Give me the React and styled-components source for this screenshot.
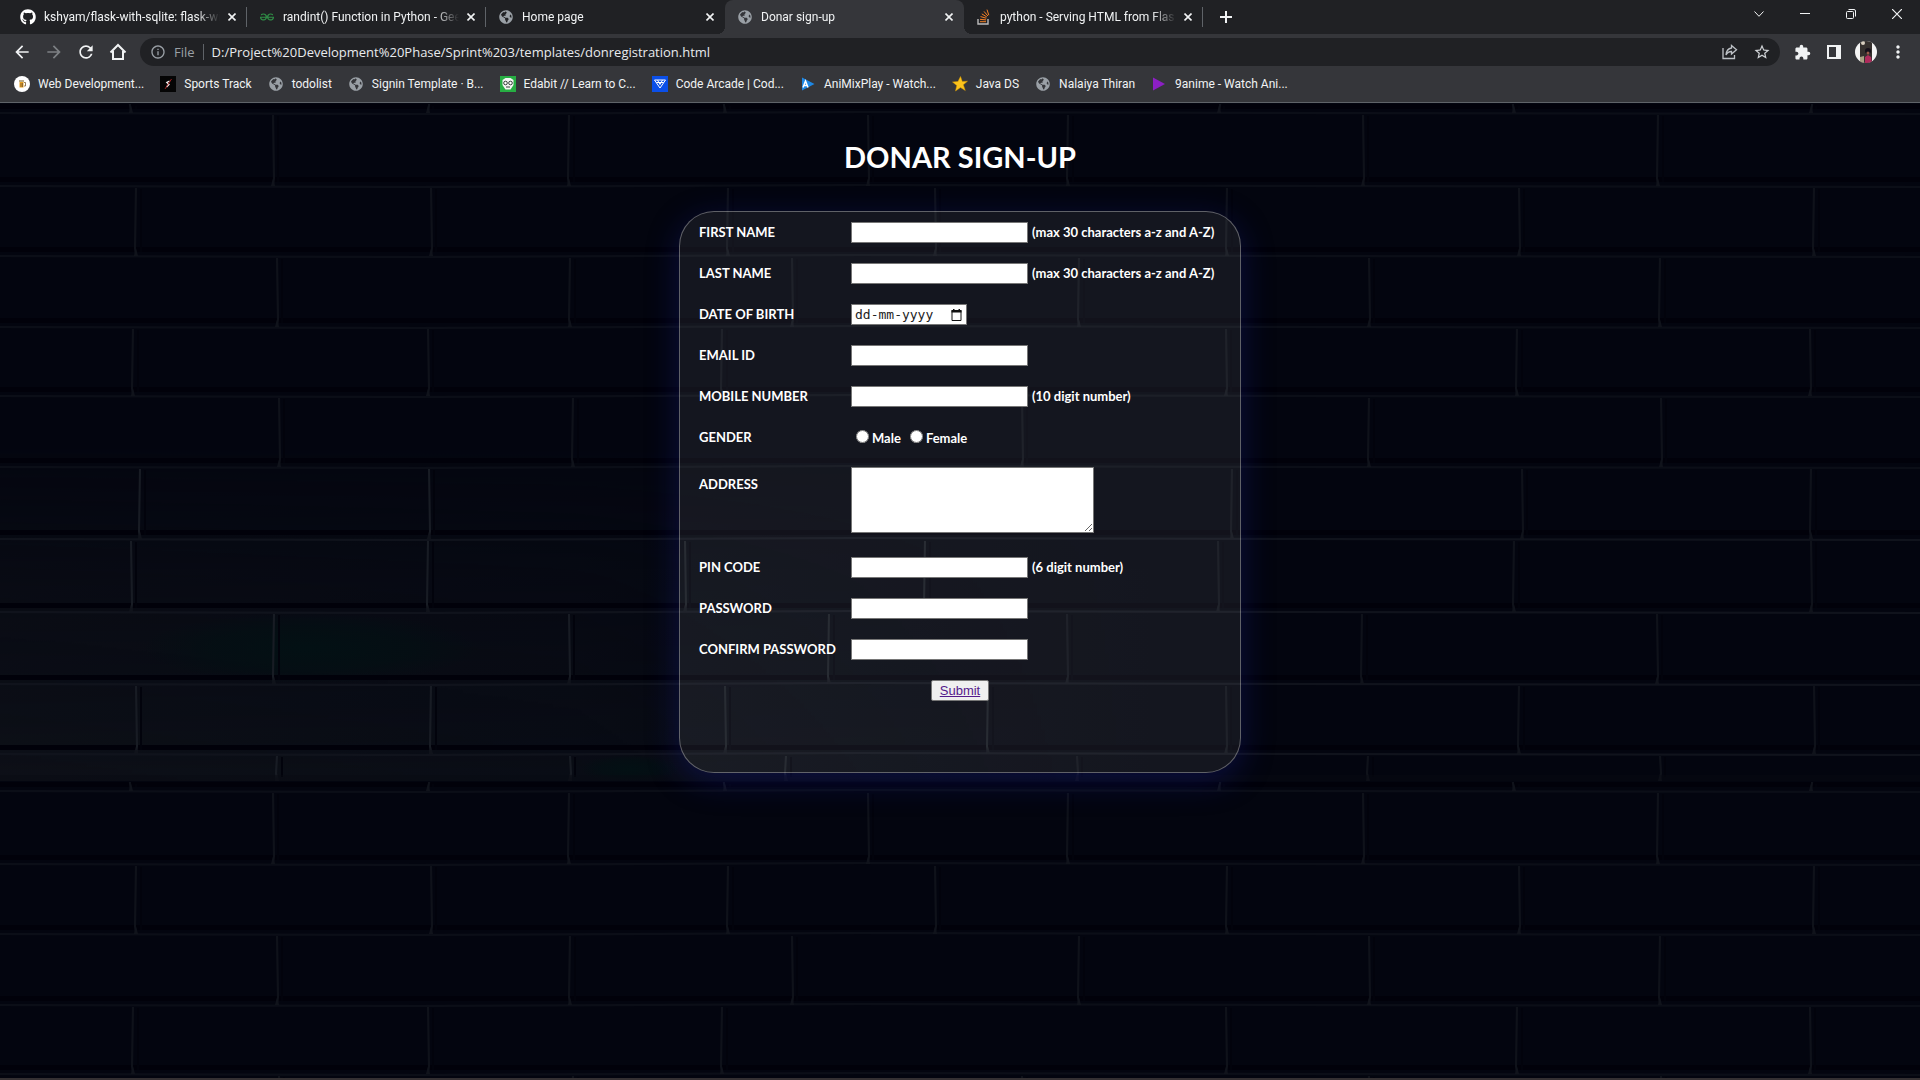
import React from "react";
import styled, { createGlobalStyle, css } from "styled-components";
import { FaGithub, FaGlobeAmericas } from "react-icons/fa";
import { SiGeeksforgeeks } from "react-icons/si";
import {
  MdArrowBack,
  MdArrowForward,
  MdRefresh,
  MdInfoOutline,
  MdStarBorder,
  MdExtension,
  MdMoreVert,
} from "react-icons/md";

const GlobalStyle = createGlobalStyle`
  *, *::before, *::after { box-sizing: border-box; }
  body { margin: 0; background: #03050f; }
`;

const uiFont = 'Roboto, "Open Sans", sans-serif';
const formFont = 'Lato, "Open Sans", sans-serif';

const Window = styled.div`
  display: flex;
  flex-direction: column;
  min-height: 100vh;
  font-family: ${uiFont};
`;

/* ---------- browser frame ---------- */

const TabStrip = styled.header`
  display: flex;
  align-items: stretch;
  height: 34px;
  padding-left: 8px;
  background: #202124;
`;

const Tab = styled.div`
  position: relative;
  display: flex;
  align-items: center;
  flex: 0 1 239px;
  min-width: 0;
  padding: 0 7px 0 12px;
  color: #f1f3f4;
  font-size: 12px;
  ${(p) =>
    p.$active &&
    css`
      background: #35363a;
      border-radius: 8px 8px 0 0;
      &::before,
      &::after {
        content: "";
        position: absolute;
        bottom: 0;
        width: 8px;
        height: 8px;
      }
      &::before {
        left: -8px;
        background: radial-gradient(circle at 0 0, transparent 8px, #35363a 8px);
      }
      &::after {
        right: -8px;
        background: radial-gradient(circle at 100% 0, transparent 8px, #35363a 8px);
      }
    `}
`;

const TabDivider = styled.span`
  position: absolute;
  top: 7px;
  right: 0;
  width: 1px;
  height: 20px;
  background: #5f6368;
`;

const TabTitle = styled.span`
  flex: 1;
  min-width: 0;
  margin: 0 4px 0 8px;
  overflow: hidden;
  white-space: nowrap;
  line-height: 18px;
  mask-image: linear-gradient(to right, #000 calc(100% - 24px), transparent);
`;

const Favicon = styled.span`
  display: flex;
  flex: none;
  align-items: center;
  justify-content: center;
  width: 16px;
  height: 16px;
  color: ${(p) => p.$color || "#9aa0a6"};
`;

const BareButton = styled.button`
  display: flex;
  flex: none;
  align-items: center;
  justify-content: center;
  width: ${(p) => p.$w || 16}px;
  height: ${(p) => p.$h || 16}px;
  padding: 0;
  border: 0;
  background: none;
  color: ${(p) => p.$color || "#f1f3f4"};
`;

const NewTab = styled(BareButton)`
  align-self: center;
  margin-left: 9px;
`;

const WindowControls = styled.div`
  display: flex;
  margin-left: auto;
`;

const Toolbar = styled.nav`
  display: flex;
  align-items: center;
  height: 36px;
  padding: 0 6px;
  background: #35363a;
`;

const Omnibox = styled.div`
  display: flex;
  align-items: center;
  flex: 1;
  height: 28px;
  margin: 0 6px;
  padding: 0 2px 0 10px;
  border-radius: 14px;
  background: #202124;
  color: #9aa0a6;
  font-size: 14px;
`;

const Scheme = styled.span`
  margin-left: 8px;
  padding-right: 8px;
  border-right: 1px solid #5f6368;
  font-family: "Open Sans", sans-serif;
  font-size: 13px;
  line-height: 16px;
`;

const Address = styled.input`
  flex: 1;
  min-width: 0;
  padding: 0 0 0 8px;
  border: 0;
  outline: 0;
  background: none;
  color: #e8eaed;
  font-family: "Open Sans", sans-serif;
  font-size: 13px;
`;

const Bookmarks = styled.nav`
  display: flex;
  align-items: center;
  gap: 16px;
  height: 33px;
  padding: 0 14px 5px;
  border-bottom: 1px solid #5f6368;
  background: #35363a;
`;

const Bookmark = styled.a`
  display: flex;
  align-items: center;
  gap: 8px;
  color: #f1f3f4;
  font-size: 12px;
  line-height: 18px;
  white-space: nowrap;
  text-decoration: none;
`;

/* ---------- page ---------- */

const Page = styled.main`
  position: relative;
  flex: 1;
  display: flex;
  flex-direction: column;
  align-items: center;
  overflow: hidden;
  border-bottom: 2px solid #343032;
  background: #03050f;
  color: #fff;
  font-family: ${formFont};
`;

const Wall = styled.svg`
  position: absolute;
  inset: 0;
  width: 100%;
  height: 100%;
`;

const Title = styled.h1`
  position: relative;
  margin: 34px 0;
  font-size: 29px;
  line-height: 40px;
  font-weight: 700;
`;

const Panel = styled.form`
  position: relative;
  width: 562px;
  max-width: 100%;
  padding: 0 9px 61px 19px;
  border: 1px solid rgba(255, 255, 255, 0.32);
  border-radius: 35px;
  background: rgba(255, 255, 255, 0.07);
  box-shadow: 0 8px 32px 0 rgba(24, 28, 145, 0.38);
  font-size: 13px;
  font-weight: 700;
`;

const Row = styled.div`
  display: grid;
  grid-template-columns: 132px 1fr;
  column-gap: 20px;
  align-items: ${(p) => (p.$tall ? "start" : "center")};
  min-height: ${(p) => (p.$tall ? 89 : 41)}px;
  padding: ${(p) => (p.$tall ? 9 : 10)}px 0;
`;

const Caption = styled.label`
  padding-top: ${(p) => (p.$tall ? 9 : 0)}px;
  padding-bottom: 2px;
  line-height: 16px;
  white-space: nowrap;
`;

const Hint = styled.span`
  padding-bottom: 2px;
  line-height: 16px;
`;

const Field = styled.div`
  display: flex;
  align-items: center;
  gap: 4px;
  white-space: nowrap;
`;

const boxStyle = css`
  border: 1px solid #767676;
  border-radius: 0;
  background: #fff;
  color: #000;
`;

const TextBox = styled.input`
  ${boxStyle}
  width: 177px;
  height: 21px;
  padding: 1px 2px;
`;

const AddressBox = styled.textarea`
  ${boxStyle}
  width: 243px;
  height: 66px;
  padding: 2px;
`;

const DateBox = styled.div`
  ${boxStyle}
  display: flex;
  align-items: center;
  width: 116px;
  height: 21px;
  padding: 0 4px 0 3px;
`;

const DateInput = styled.input`
  flex: 1;
  min-width: 0;
  padding: 0;
  border: 0;
  outline: 0;
  background: none;
  font-family: "DejaVu Sans Mono", monospace;
  font-size: 13px;
  &::placeholder {
    color: #222;
    opacity: 1;
  }
`;

const Choice = styled.label`
  display: flex;
  align-items: center;
  line-height: 16px;
  input {
    width: 13px;
    height: 13px;
    margin: 0 3px 2px 5px;
  }
`;

const Actions = styled.div`
  display: flex;
  justify-content: center;
  padding: 10px 10px 10px 0;
`;

const Submit = styled.button`
  height: 21px;
  padding: 0 8px;
  border: 1px solid #767676;
  border-radius: 2px;
  background: #efefef;
  color: #551a8b;
  font-family: "Liberation Sans", Arial, sans-serif;
  font-size: 13px;
  line-height: 16px;
  text-decoration: underline;
`;

/* ---------- drawings ---------- */

const courses = [
  [0, 10, [131, 428, 725, 1219, 1514, 1811]],
  [10, 83, [273, 569, 868, 1068, 1363, 1658]],
  [83, 153, [136, 431, 728, 935, 1227, 1519, 1814]],
  [153, 224, [277, 570, 792, 1079, 1369, 1660]],
  [224, 293, [133, 428, 722, 1226, 1517, 1810]],
  [293, 364, [279, 573, 1022, 1369, 1661]],
  [364, 436, [140, 429, 1232, 1522, 1811]],
  [436, 509, [131, 428, 685, 925, 1218, 1514, 1811]],
  [509, 581, [274, 569, 829, 1067, 1362, 1657]],
  [581, 651, [136, 431, 725, 988, 1226, 1519, 1814]],
  [651, 678, [277, 570, 786, 1077, 1368, 1660]],
];

function BrickWall() {
  return (
    <Wall aria-hidden="true">
      <defs>
        <linearGradient id="worn" x1="0" x2="1" y1="0" y2="0">
          <stop offset="0" stopColor="#10131a" stopOpacity=".75" />
          <stop offset=".3" stopColor="#0d1119" stopOpacity=".6" />
          <stop offset=".6" stopColor="#0a0e17" stopOpacity="0" />
        </linearGradient>
        <linearGradient id="fadeIn" x1="0" x2="0" y1="0" y2="1">
          <stop offset="0" stopColor="#000" />
          <stop offset=".4" stopColor="#888" />
          <stop offset="1" stopColor="#fff" />
        </linearGradient>
        <mask id="lower">
          <rect y="340" width="1920" height="338" fill="url(#fadeIn)" />
        </mask>
        <radialGradient id="moss">
          <stop offset="0" stopColor="#021114" stopOpacity=".9" />
          <stop offset=".6" stopColor="#021013" stopOpacity=".6" />
          <stop offset="1" stopColor="#021013" stopOpacity="0" />
        </radialGradient>
        <pattern id="bricks" width="1920" height="678" patternUnits="userSpaceOnUse">
          <rect width="1920" height="678" fill="#03050f" />
          <rect y="340" width="1920" height="338" fill="url(#worn)" mask="url(#lower)" />
          <ellipse cx="310" cy="545" rx="170" ry="36" fill="url(#moss)" />
          <ellipse cx="630" cy="666" rx="50" ry="14" fill="url(#moss)" />
          {courses.map(([top, bottom, joints], i) => (
            <g key={top}>
              {bottom < 678 && (
                <>
                  <rect y={bottom - 9} width="1920" height="5" fill="#01010a" />
                  <path
                    d={`M0 ${bottom}L420 ${bottom + 1}L860 ${bottom - 1}L1300 ${bottom}L1920 ${bottom + 1}`}
                    fill="none"
                    stroke={i > 5 ? "#10131c" : "#0b0e17"}
                    strokeWidth="2"
                  />
                </>
              )}
              {joints.map((x, n) => {
                const left = x < 1000;
                const lean = (i + n) % 2 ? 1 : -1;
                return (
                  <g key={x}>
                    <path d={`M${x + 5} ${top + 3}V${bottom - 4}`} stroke="#02030c" strokeWidth="2" />
                    <path
                      d={`M${x} ${top + 2}L${x + lean} ${bottom - 8}L${x} ${bottom}`}
                      fill="none"
                      stroke={i > 5 && left ? "#181c24" : "#0f121a"}
                      strokeWidth="2"
                    />
                    <path d={`M${x - 2} ${bottom}l2-7 2 7z`} fill="#10131b" />
                  </g>
                );
              })}
            </g>
          ))}
          <rect y="672" width="1920" height="6" fill="#070911" opacity=".4" />
        </pattern>
      </defs>
      <rect width="100%" height="100%" fill="url(#bricks)" />
    </Wall>
  );
}

const Cross = () => (
  <svg width="8" height="8" viewBox="0 0 8 8" stroke="currentColor" strokeWidth="1.6">
    <path d="M.5 .5l7 7M7.5 .5l-7 7" />
  </svg>
);

const StackIcon = () => (
  <svg width="14" height="16" viewBox="0 0 14 16" fill="none">
    <path d="M1 10v5h10v-5" stroke="#bcbbbb" strokeWidth="1.4" />
    <path
      d="M3 12.7h6M3 10.3l6 .6M3.5 7.6l5.8 1.6M4.8 4.9l5.1 3.1M7 2.4l3.9 4.6M10 .6l1.8 5.6"
      stroke="#f48024"
      strokeWidth="1"
    />
  </svg>
);

const HomeIcon = () => (
  <svg width="18" height="18" viewBox="0 0 18 18" fill="none" stroke="currentColor" strokeWidth="2">
    <path d="M1.5 9.500L9 2l7.500 7.500M4 8v8h10V8" />
  </svg>
);

const ShareIcon = () => (
  <svg width="16" height="16" viewBox="0 0 16 16" fill="none" stroke="currentColor" strokeWidth="1.3">
    <path d="M1 4v10.500h11.500V11" />
    <path d="M9.500 1.500l5 4.300-5 4.300V7.500C7 7.500 5.200 8.600 4 11c.3-4 2.300-6.500 5.500-7z" />
  </svg>
);

const PanelIcon = () => (
  <svg width="14" height="14" viewBox="0 0 14 14">
    <path fillRule="evenodd" fill="currentColor" d="M0 0h14v14H0zM2 2v10h7V2z" />
  </svg>
);

const Avatar = () => (
  <svg width="22" height="22" viewBox="0 0 22 22">
    <defs>
      <clipPath id="face">
        <circle cx="11" cy="11" r="11" />
      </clipPath>
    </defs>
    <g clipPath="url(#face)">
      <rect width="22" height="22" fill="#f4f4f4" />
      <rect x="5" width="12" height="22" fill="#35302e" />
      <circle cx="8" cy="2" r="2" fill="#d8cfc0" />
      <path d="M5 16l4-1v7H5z" fill="#a9a184" />
      <circle cx="13" cy="10" r="3" fill="#15101a" />
      <circle cx="13" cy="12" r="1.500" fill="#9a5a4a" />
      <path d="M10 16l3-2 3 2 1 6h-7z" fill="#b02a5c" />
    </g>
  </svg>
);

const BeerIcon = () => (
  <svg width="16" height="16" viewBox="0 0 16 16">
    <circle cx="8" cy="8" r="8" fill="#fff" />
    <path d="M5.500 5.500h4v6h-4z" fill="#e8a020" />
    <path d="M5 4h5v2H5z" fill="#b9a988" />
    <path d="M10 6.500h1.500v3.500H10M7 7v4M8.500 7v4" fill="none" stroke="#7a5a30" strokeWidth=".8" />
  </svg>
);

const SportsIcon = () => (
  <svg width="16" height="16" viewBox="0 0 16 16">
    <path fill="#050505" d="M0 0h16v16H0z" />
    <path d="M9.500 5L6.800 6.500l2.200 2L6.500 11" fill="none" stroke="#f2f2f2" strokeWidth="1.300" />
    <path d="M11.500 3L5 13" stroke="#c62828" strokeWidth=".8" />
  </svg>
);

const EdabitIcon = () => (
  <svg width="16" height="16" viewBox="0 0 16 16">
    <path fill="#27ae43" d="M0 0h16v16H0z" />
    <path d="M2.500 4l3-2h5l3 2v5l-3 4.500h-5L2.500 9z" fill="#f4f4f4" />
    <g fill="#fff" stroke="#1d2b22" strokeWidth=".9">
      <circle cx="5.500" cy="7" r="1.800" />
      <circle cx="10.500" cy="7" r="1.800" />
      <path d="M6 11h4" />
    </g>
  </svg>
);

const ArcadeIcon = () => (
  <svg width="16" height="16" viewBox="0 0 16 16">
    <path fill="#0b4fe8" d="M0 0h16v16H0z" />
    <path d="M2.500 4h11L8 12zM5.500 4L8 8.500 10.500 4M4.300 6.500h7.400" fill="none" stroke="#fff" />
  </svg>
);

const AniMixIcon = () => (
  <svg width="14" height="16" viewBox="0 0 14 16">
    <path d="M1 1.500L13.500 8 1 14.500z" fill="#1e88e5" />
    <path d="M2 11.500L4.500 5 7 11.500M3 9.500h3" fill="none" stroke="#fff" strokeWidth="1.500" />
  </svg>
);

const StarIcon = () => (
  <svg width="16" height="16" viewBox="0 0 16 16">
    <path
      d="M8.500 .5l1.800 5 5.200-.3-4.200 3.600 2 5.700-4.800-3L3.500 15l1.300-5.500L.5 6l5.500-.5z"
      fill="#fbc31c"
      stroke="#d99a00"
      strokeWidth=".5"
    />
  </svg>
);

const PlayIcon = () => (
  <svg width="14" height="16" viewBox="0 0 14 16">
    <path d="M1 1.500L13 8 1 14.500z" fill="#8c1fc4" />
  </svg>
);

const Globe = () => <FaGlobeAmericas size={14} />;

const tabs = [
  { title: "kshyam/flask-with-sqlite: flask-wi", icon: <FaGithub size={16} />, color: "#fff", divider: true },
  { title: "randint() Function in Python - Gee", icon: <SiGeeksforgeeks size={14} />, color: "#2f8d46", divider: true },
  { title: "Home page", icon: <Globe /> },
  { title: "Donar sign-up", icon: <Globe />, active: true },
  { title: "python - Serving HTML from Flas", icon: <StackIcon />, divider: true },
];

const bookmarks = [
  ["Web Development...", <BeerIcon />],
  ["Sports Track", <SportsIcon />],
  ["todolist", <Globe />],
  ["Signin Template · B...", <Globe />],
  ["Edabit // Learn to C...", <EdabitIcon />],
  ["Code Arcade | Cod...", <ArcadeIcon />],
  ["AniMixPlay - Watch...", <AniMixIcon />],
  ["Java DS", <StarIcon />],
  ["Nalaiya Thiran", <Globe />],
  ["9anime - Watch Ani...", <PlayIcon />],
];

function TextRow({ id, label, type = "text", hint }) {
  return (
    <Row>
      <Caption htmlFor={id}>{label}</Caption>
      <Field>
        <TextBox id={id} name={id} type={type} />
        {hint && <Hint>{hint}</Hint>}
      </Field>
    </Row>
  );
}

export default function App() {
  return (
    <Window>
      <GlobalStyle />
      <TabStrip>
        {tabs.map((t) => (
          <Tab key={t.title} $active={t.active}>
            <Favicon $color={t.color}>{t.icon}</Favicon>
            <TabTitle>{t.title}</TabTitle>
            <BareButton aria-label="Close tab">
              <Cross />
            </BareButton>
            {t.divider && <TabDivider />}
          </Tab>
        ))}
        <NewTab $w={28} $h={28} aria-label="New tab">
          <svg width="12" height="12" viewBox="0 0 12 12" stroke="currentColor" strokeWidth="2">
            <path d="M6 0v12M0 6h12" />
          </svg>
        </NewTab>
        <WindowControls>
          <BareButton $w={46} $h={28} aria-label="Search tabs">
            <svg width="10" height="6" viewBox="0 0 10 6" fill="none" stroke="currentColor">
              <path d="M.5 .5L5 5.300 9.500 .5" />
            </svg>
          </BareButton>
          <BareButton $w={46} $h={28} aria-label="Minimize">
            <svg width="10" height="2" viewBox="0 0 10 2">
              <path d="M0 0h10v1H0z" fill="currentColor" />
            </svg>
          </BareButton>
          <BareButton $w={46} $h={28} aria-label="Restore">
            <svg width="10" height="10" viewBox="0 0 10 10" fill="none" stroke="currentColor">
              <rect x=".5" y="2.500" width="7" height="7" rx="1" />
              <path d="M2.500 .5H8A1.500 1.500 0 0 1 9.500 2v5.500" />
            </svg>
          </BareButton>
          <BareButton $w={46} $h={28} aria-label="Close">
            <svg width="10" height="10" viewBox="0 0 10 10" stroke="currentColor" strokeWidth="1.200">
              <path d="M0 0l10 10M10 0L0 10" />
            </svg>
          </BareButton>
        </WindowControls>
      </TabStrip>

      <Toolbar>
        <BareButton $w={32} $h={28} aria-label="Back"><MdArrowBack size={20} /></BareButton>
        <BareButton $w={32} $h={28} $color="#7d8084" aria-label="Forward"><MdArrowForward size={20} /></BareButton>
        <BareButton $w={32} $h={28} aria-label="Reload"><MdRefresh size={20} /></BareButton>
        <BareButton $w={32} $h={28} aria-label="Home"><HomeIcon /></BareButton>
        <Omnibox>
          <MdInfoOutline size={16} />
          <Scheme>File</Scheme>
          <Address
            aria-label="Address"
            defaultValue="D:/Project%20Development%20Phase/Sprint%203/templates/donregistration.html"
          />
          <BareButton $w={32} $h={28} $color="#bdc1c6" aria-label="Share"><ShareIcon /></BareButton>
          <BareButton $w={32} $h={28} $color="#d0d3d7" aria-label="Bookmark"><MdStarBorder size={18} /></BareButton>
        </Omnibox>
        <BareButton $w={32} $h={28} aria-label="Extensions"><MdExtension size={17} /></BareButton>
        <BareButton $w={32} $h={28} aria-label="Side panel"><PanelIcon /></BareButton>
        <BareButton $w={32} $h={28} aria-label="Profile"><Avatar /></BareButton>
        <BareButton $w={32} $h={28} aria-label="Menu"><MdMoreVert size={20} /></BareButton>
      </Toolbar>

      <Bookmarks>
        {bookmarks.map(([name, icon]) => (
          <Bookmark key={name} href="#">
            <Favicon>{icon}</Favicon>
            {name}
          </Bookmark>
        ))}
      </Bookmarks>

      <Page>
        <BrickWall />
        <Title>DONAR SIGN-UP</Title>
        <Panel onSubmit={(e) => e.preventDefault()}>
          <TextRow id="first" label="FIRST NAME" hint="(max 30 characters a-z and A-Z)" />
          <TextRow id="last" label="LAST NAME" hint="(max 30 characters a-z and A-Z)" />
          <Row>
            <Caption htmlFor="dob">DATE OF BIRTH</Caption>
            <Field>
              <DateBox>
                <DateInput id="dob" placeholder="dd-mm-yyyy" />
                <BareButton type="button" $w={12} $h={14} $color="#111" aria-label="Open calendar">
                  <svg width="11" height="12" viewBox="0 0 11 12">
                    <path d="M1 1.500h9v10H1z" fill="none" stroke="currentColor" />
                    <path d="M.5 1h10v2.500H.5zM2 0h1.500v1H2zM7.500 0H9v1H7.500z" fill="currentColor" />
                  </svg>
                </BareButton>
              </DateBox>
            </Field>
          </Row>
          <TextRow id="email" label="EMAIL ID" />
          <TextRow id="mobile" label="MOBILE NUMBER" hint="(10 digit number)" />
          <Row role="radiogroup" aria-labelledby="gender">
            <Caption as="span" id="gender">GENDER</Caption>
            <Field>
              <Choice><input type="radio" name="gender" />Male</Choice>
              <Choice><input type="radio" name="gender" />Female</Choice>
            </Field>
          </Row>
          <Row $tall>
            <Caption $tall htmlFor="address">ADDRESS</Caption>
            <AddressBox id="address" />
          </Row>
          <TextRow id="pin" label="PIN CODE" hint="(6 digit number)" />
          <TextRow id="password" label="PASSWORD" type="password" />
          <TextRow id="confirm" label="CONFIRM PASSWORD" type="password" />
          <Actions>
            <Submit type="submit">Submit</Submit>
          </Actions>
        </Panel>
      </Page>
    </Window>
  );
}
